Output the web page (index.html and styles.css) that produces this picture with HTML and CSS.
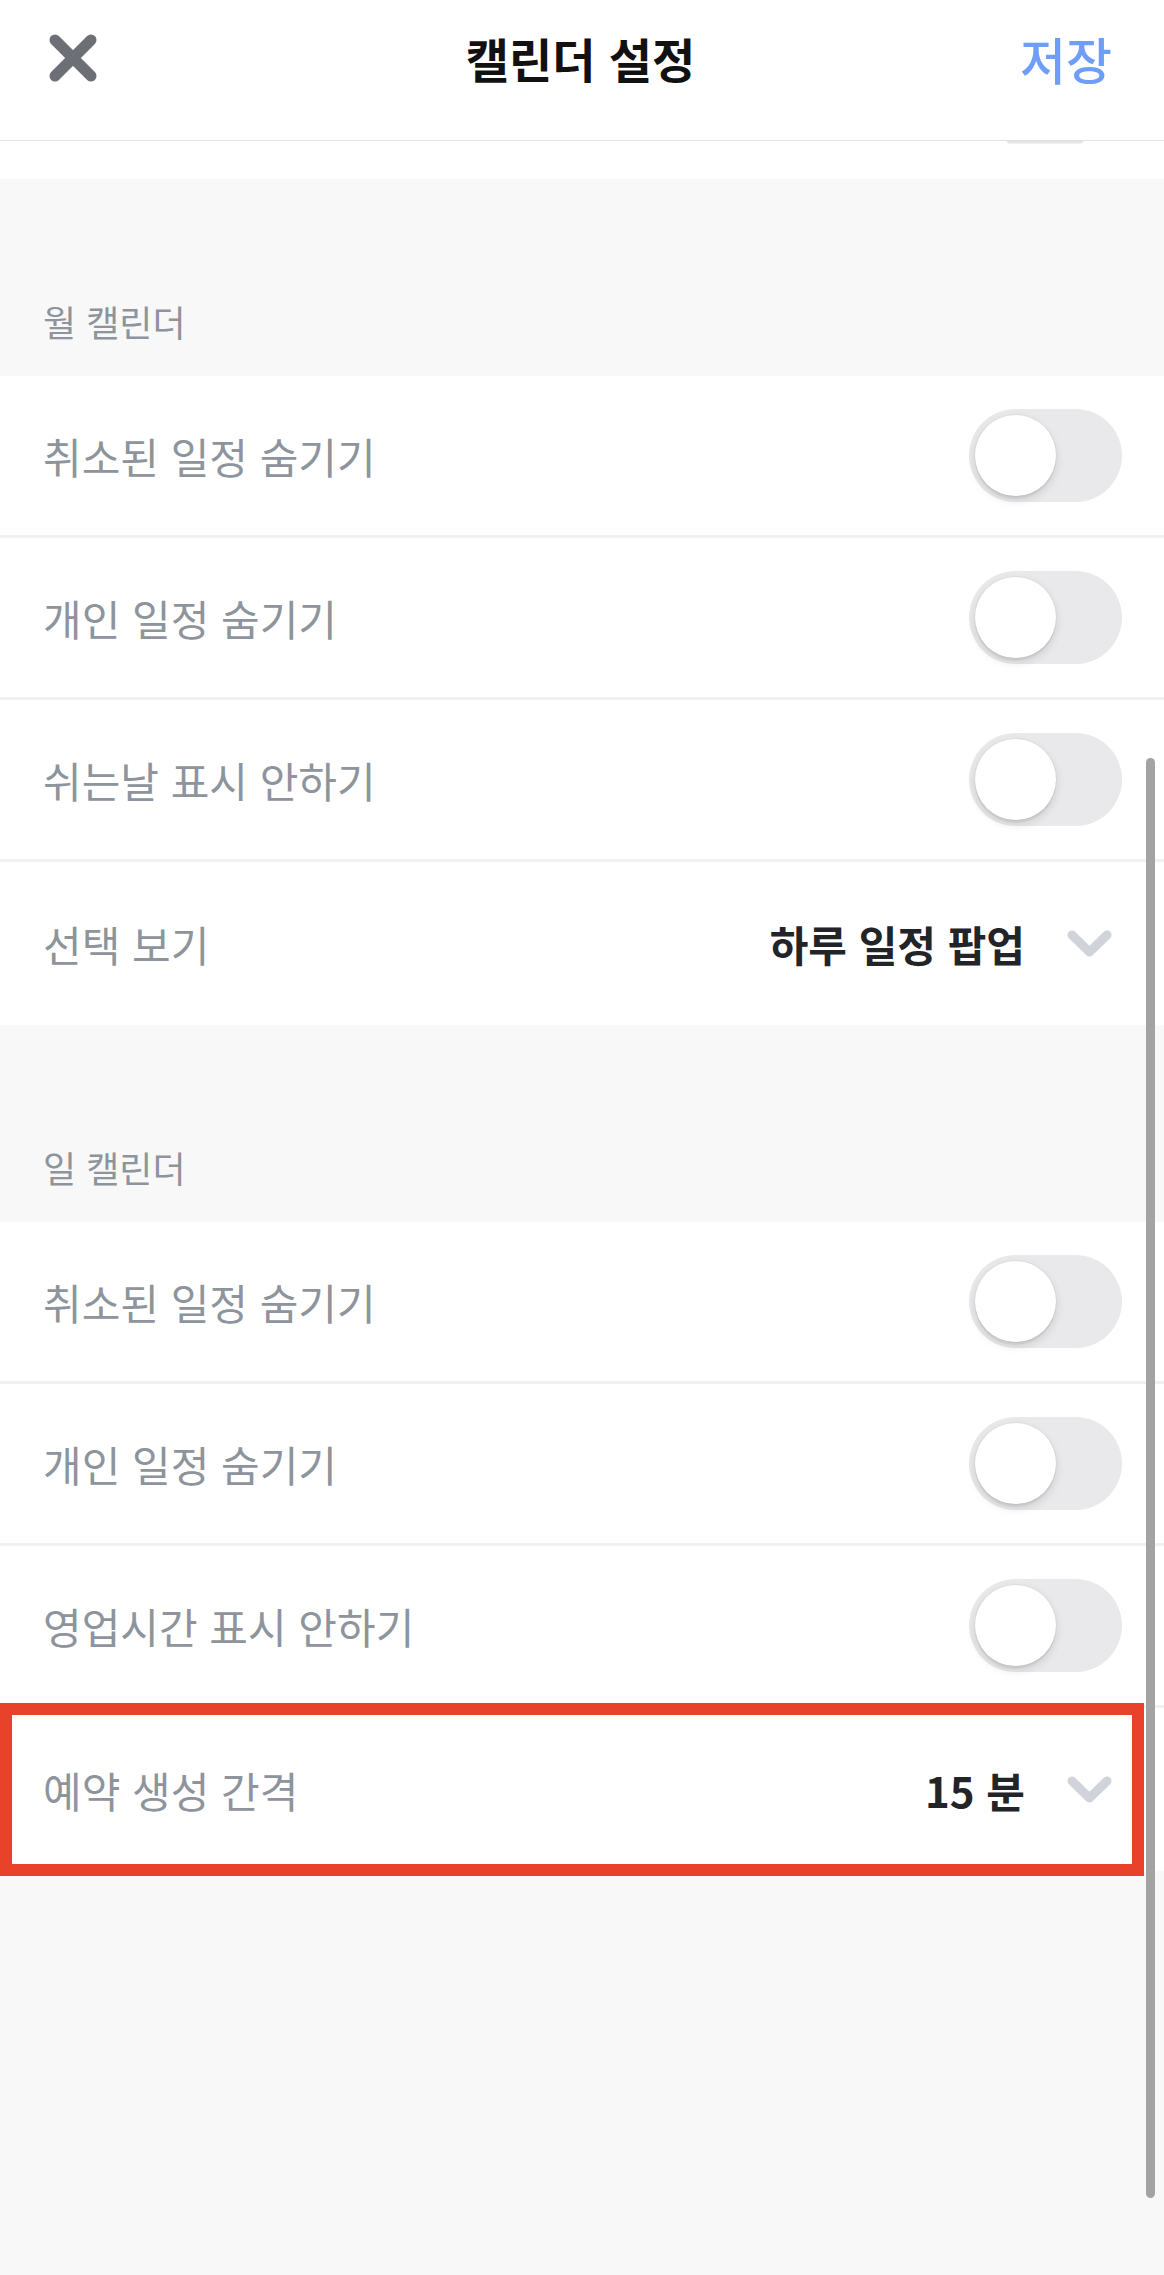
FILE: index.html
```html
<!DOCTYPE html>
<html lang="ko">
<head>
  <meta charset="UTF-8" />
  <meta name="viewport" content="width=device-width, initial-scale=1.0"/>
  <title>캘린더 설정</title>
  <link rel="stylesheet" href="styles.css">
</head>
<body>
  <header class="topbar">
    <a class="close-btn" href="#" title="닫기">
      <svg width="48" height="48" viewBox="0 0 48 48">
        <path d="M6 6 L42 42 M42 6 L6 42" stroke="#6c7076" stroke-width="11" stroke-linecap="round" fill="none"/>
      </svg>
    </a>
    <h1>캘린더 설정</h1>
    <a class="save-link" href="#">저장</a>
  </header>

  <!-- bottom edge of the row above, scrolled under the header -->
  <div class="peek"><div class="peek-edge"></div></div>

  <div class="section-title">월 캘린더</div>
  <div class="group">
    <div class="row">
      <span class="label">취소된 일정 숨기기</span>
      <label class="switch"><input type="checkbox"><span class="knob"></span></label>
    </div>
    <div class="row">
      <span class="label">개인 일정 숨기기</span>
      <label class="switch"><input type="checkbox"><span class="knob"></span></label>
    </div>
    <div class="row">
      <span class="label">쉬는날 표시 안하기</span>
      <label class="switch"><input type="checkbox"><span class="knob"></span></label>
    </div>
    <div class="row">
      <span class="label">선택 보기</span>
      <div class="picker">
        <span class="value">하루 일정 팝업</span>
        <svg class="chevron" width="45" height="28" viewBox="0 0 45 28">
          <path d="M5 5 L22.5 22 L40 5" stroke="#d0d3da" stroke-width="9" stroke-linecap="round" stroke-linejoin="round" fill="none"/>
        </svg>
      </div>
    </div>
  </div>

  <div class="section-title">일 캘린더</div>
  <div class="group">
    <div class="row">
      <span class="label">취소된 일정 숨기기</span>
      <label class="switch"><input type="checkbox"><span class="knob"></span></label>
    </div>
    <div class="row">
      <span class="label">개인 일정 숨기기</span>
      <label class="switch"><input type="checkbox"><span class="knob"></span></label>
    </div>
    <div class="row">
      <span class="label">영업시간 표시 안하기</span>
      <label class="switch"><input type="checkbox"><span class="knob"></span></label>
    </div>
    <div class="row marked">
      <span class="label">예약 생성 간격</span>
      <div class="picker">
        <span class="value">15 분</span>
        <svg class="chevron" width="45" height="28" viewBox="0 0 45 28">
          <path d="M5 5 L22.5 22 L40 5" stroke="#d0d3da" stroke-width="9" stroke-linecap="round" stroke-linejoin="round" fill="none"/>
        </svg>
      </div>
    </div>
  </div>

  <div class="scrollbar"></div>
</body>
</html>
```

FILE: styles.css
```css
body {
  margin: 0;
  min-height: 100vh;
  background: #f8f8f9;
  font-family: "Noto Sans CJK KR", "Noto Sans", sans-serif;
  color: #222428;
  overflow: hidden;
}
.topbar {
  display: grid;
  grid-template-columns: 1fr auto 1fr;
  align-items: center;
  height: 141px;
  box-sizing: border-box;
  padding: 0 52px 24px 49px;
  background: white;
  border-bottom: 1px solid #e2e2e4;
}
.topbar h1 {
  margin: 0;
  font-size: 47px;
  line-height: 56px;
  font-weight: 700;
  color: #111;
}
.close-btn {
  display: flex;
  align-items: center;
}
.save-link {
  justify-self: end;
  font-size: 50px;
  line-height: 56px;
  font-weight: 500;
  color: #6f9ef8;
  text-decoration: none;
}
.peek {
  height: 38px;
  background: white;
}
.peek-edge {
  width: 76px;
  height: 3px;
  margin: 0 81px 0 auto;
  border-radius: 0 0 40px 40px;
  background: linear-gradient(#dedee2, #f4f4f6);
}
.section-title {
  height: 197px;
  box-sizing: border-box;
  padding: 121px 43px 0;
  font-size: 36px;
  line-height: 42px;
  color: #8e949c;
}
.group {
  background: white;
}
.row {
  display: flex;
  align-items: center;
  justify-content: space-between;
  height: 159px;
  padding: 0 42px 0 43px;
  border-bottom: 3px solid #f1f1f3;
}
.row:last-child {
  height: 163px;
  border-bottom: none;
}
.label {
  font-size: 42px;
  line-height: 50px;
  color: #8e949c;
}
.switch {
  position: relative;
  display: block;
  width: 153px;
  height: 93px;
  border-radius: 47px;
  background: #e9e9eb;
  cursor: pointer;
}
.switch input {
  display: none;
}
.switch .knob {
  position: absolute;
  top: 6px;
  left: 6px;
  width: 81px;
  height: 81px;
  border-radius: 50%;
  background: white;
  box-shadow: 0 4px 10px rgba(0,0,0,0.12), 0 3px 1px rgba(0,0,0,0.05), 0 0 0 1px rgba(0,0,0,0.03);
}
.picker {
  display: flex;
  align-items: center;
  gap: 42px;
  margin-right: 10px;
}
.value {
  font-size: 42px;
  line-height: 50px;
  font-weight: 700;
  color: #222428;
}
.chevron {
  display: block;
}
.marked {
  position: relative;
}
.marked::after {
  content: "";
  position: absolute;
  top: -5px;
  bottom: -5px;
  left: 0;
  right: 20px;
  border: 12px solid #e8422a;
  pointer-events: none;
}
.scrollbar {
  position: fixed;
  top: 758px;
  right: 9px;
  width: 9px;
  height: 1440px;
  border-radius: 5px;
  background: #a3a3a3;
}
```
